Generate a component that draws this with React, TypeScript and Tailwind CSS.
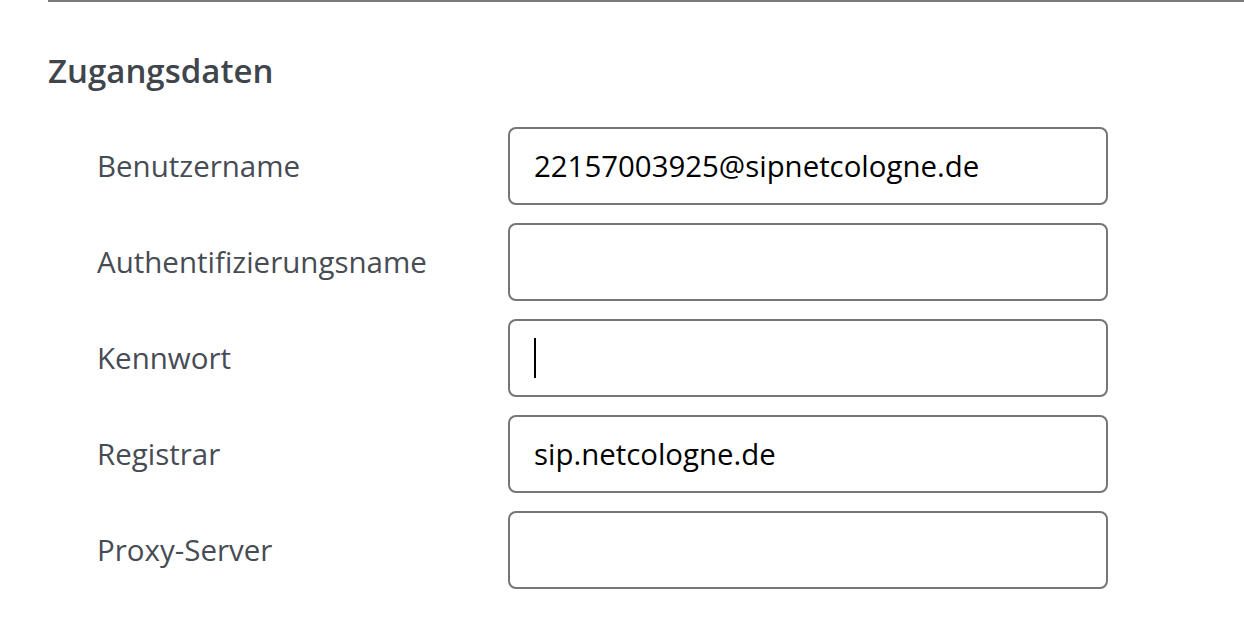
const rows = [
  { label: "Benutzername", value: "22157003925@sipnetcologne.de" },
  { label: "Authentifizierungsname", value: "" },
  { label: "Kennwort", value: "", caret: true },
  { label: "Registrar", value: "sip.netcologne.de" },
  { label: "Proxy-Server", value: "" },
];

export default function App() {
  return (
    <div className="bg-white h-[620px] pl-[48px] font-['Open_Sans',sans-serif]">
      <div className="border-t-2 border-[#7b7b7b]">
        <h2 className="pt-[49px] text-[33px] leading-[40px] font-semibold text-[#40454c]">Zugangsdaten</h2>
        <div className="mt-[36px] flex flex-col gap-[18px]">
          {rows.map((row) => (
            <div key={row.label} className="flex items-center">
              <label className="w-[460px] pl-[49px] text-[29.5px] text-[#474c54]">{row.label}</label>
              <div className="w-[600px] h-[78px] border-2 border-[#767676] rounded-[8px] pl-[24px] flex items-center text-[29.4px] text-black">
                {row.caret ? <span className="w-[2px] h-[40px] bg-black" /> : row.value}
              </div>
            </div>
          ))}
        </div>
      </div>
    </div>
  );
}
